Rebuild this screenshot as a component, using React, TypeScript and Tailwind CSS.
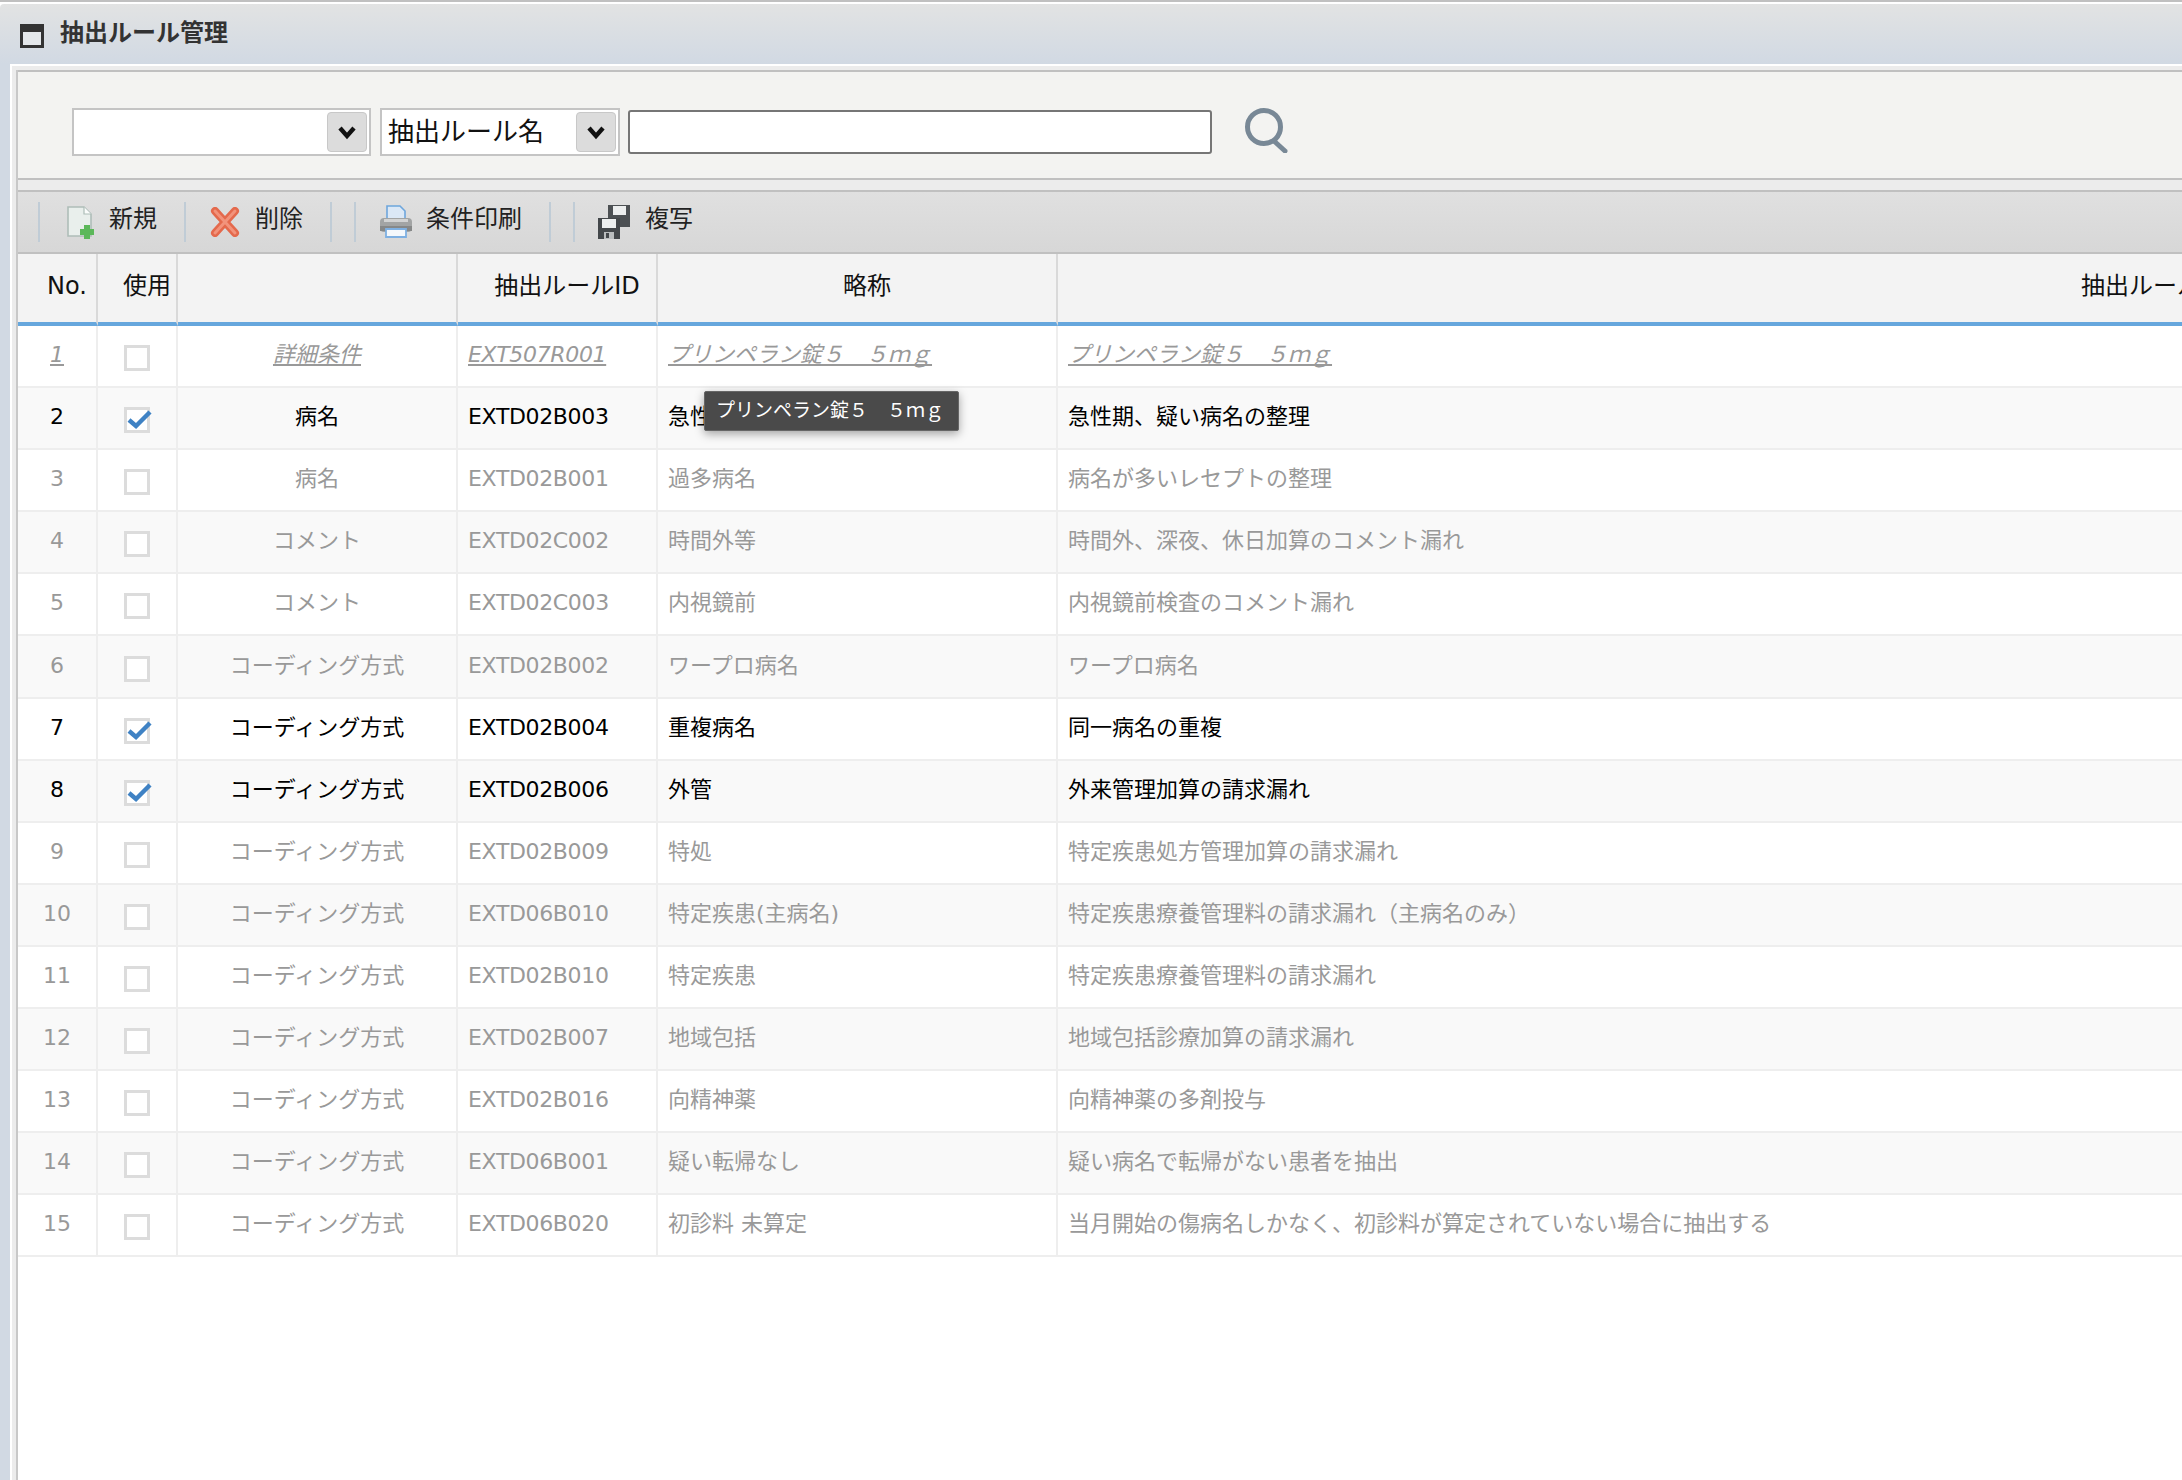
import React from 'react';

interface Rule {
  no: number;
  kind: string;
  id: string;
  short: string;
  name: string;
  used?: boolean;
  link?: boolean;
}

const coding = 'コーディング方式';

const rules: Rule[] = [
  { no: 1, kind: '詳細条件', id: 'EXT507R001', short: 'プリンペラン錠５　５ｍｇ', name: 'プリンペラン錠５　５ｍｇ', link: true },
  { no: 2, kind: '病名', id: 'EXTD02B003', short: '急性期・疑い', name: '急性期、疑い病名の整理', used: true },
  { no: 3, kind: '病名', id: 'EXTD02B001', short: '過多病名', name: '病名が多いレセプトの整理' },
  { no: 4, kind: 'コメント', id: 'EXTD02C002', short: '時間外等', name: '時間外、深夜、休日加算のコメント漏れ' },
  { no: 5, kind: 'コメント', id: 'EXTD02C003', short: '内視鏡前', name: '内視鏡前検査のコメント漏れ' },
  { no: 6, kind: coding, id: 'EXTD02B002', short: 'ワープロ病名', name: 'ワープロ病名' },
  { no: 7, kind: coding, id: 'EXTD02B004', short: '重複病名', name: '同一病名の重複', used: true },
  { no: 8, kind: coding, id: 'EXTD02B006', short: '外管', name: '外来管理加算の請求漏れ', used: true },
  { no: 9, kind: coding, id: 'EXTD02B009', short: '特処', name: '特定疾患処方管理加算の請求漏れ' },
  { no: 10, kind: coding, id: 'EXTD06B010', short: '特定疾患(主病名)', name: '特定疾患療養管理料の請求漏れ（主病名のみ）' },
  { no: 11, kind: coding, id: 'EXTD02B010', short: '特定疾患', name: '特定疾患療養管理料の請求漏れ' },
  { no: 12, kind: coding, id: 'EXTD02B007', short: '地域包括', name: '地域包括診療加算の請求漏れ' },
  { no: 13, kind: coding, id: 'EXTD02B016', short: '向精神薬', name: '向精神薬の多剤投与' },
  { no: 14, kind: coding, id: 'EXTD06B001', short: '疑い転帰なし', name: '疑い病名で転帰がない患者を抽出' },
  { no: 15, kind: coding, id: 'EXTD06B020', short: '初診料 未算定', name: '当月開始の傷病名しかなく、初診料が算定されていない場合に抽出する' },
];

const NewIcon = () => (
  <svg width="30" height="34" viewBox="0 0 30 34">
    <path d="M2 2h16l7 7v22H2z" fill="#e9efec" stroke="#aebdb8" strokeWidth="1.6" />
    <path d="M18 2v7h7" fill="#fafcfb" stroke="#aebdb8" strokeWidth="1.2" />
    <path d="M18 20h6v4h4v6h-4v4h-6v-4h-4v-6h4z" fill="#5cb85a" />
  </svg>
);

const DeleteIcon = () => (
  <svg width="30" height="30" viewBox="0 0 30 30">
    <path d="M5 4 L25 26 M25 4 L5 26" stroke="#e4694c" strokeWidth="8" strokeLinecap="round" />
    <path d="M5 4 L25 26 M25 4 L5 26" stroke="#f2937b" strokeWidth="3" strokeLinecap="round" />
  </svg>
);

const PrintIcon = () => (
  <svg width="34" height="34" viewBox="0 0 34 34">
    <path d="M8 1h13l5 5v10H8z" fill="#dbe8f6" stroke="#6ea6dc" strokeWidth="1.6" />
    <rect x="1" y="13" width="32" height="14" rx="4" fill="#a2a4a4" />
    <rect x="5" y="14" width="24" height="3" fill="#d2d3d3" />
    <rect x="1" y="21" width="32" height="5" fill="#868888" />
    <path d="M7 24h20v8H7z" fill="#f4f8fc" stroke="#7eb0e2" strokeWidth="1.8" />
  </svg>
);

const SaveIcon = () => (
  <svg width="34" height="36" viewBox="0 0 34 36">
    <path d="M11 1h22v22H20V14H11z" fill="#4c5053" />
    <rect x="16" y="2" width="13" height="9" fill="#eceeee" />
    <path d="M1 14h22v21H1z" fill="#43474a" />
    <rect x="5" y="15" width="14" height="9" fill="#eceeee" />
    <rect x="7" y="28" width="10" height="7" fill="#b9bcbd" />
    <rect x="9" y="29" width="3" height="5" fill="#43474a" />
  </svg>
);

const Sep = ({ className = '' }: { className?: string }) => (
  <div className={`w-[2px] h-10 bg-[#c0ccd6] shrink-0 ${className}`}></div>
);

const Tool = ({ icon, label, className = '' }: { icon: React.ReactNode; label: string; className?: string }) => (
  <div className={`flex items-center shrink-0 ${className}`}>
    {icon}
    <span className="text-[24px] leading-none text-[#222] -mt-[6px]">{label}</span>
  </div>
);

const DropButton = () => (
  <div className="w-10 h-10 rounded-[4px] border border-[#c8c8c8] bg-[#dcdcdc] flex items-center justify-center">
    <svg width="20" height="15" viewBox="0 0 20 15">
      <path d="M3 3 L10 11 L17 3" fill="none" stroke="#111" strokeWidth="4.4" />
    </svg>
  </div>
);

const Check = ({ on }: { on?: boolean }) => (
  <div className="relative w-[26px] h-[26px] mx-auto mt-1 border-[3px] border-[#dcdcdc] bg-white">
    {on && (
      <svg className="absolute -left-[1px] -top-[2px]" width="26" height="24" viewBox="0 0 26 24">
        <path d="M3 12 L10 18 L24 4" fill="none" stroke="#3f82c4" strokeWidth="4.4" />
      </svg>
    )}
  </div>
);

const th = 'h-[72px] pl-5 pb-1 text-center font-normal text-[24px] text-[#111] border-r-2 border-[#d9d9d9] whitespace-nowrap overflow-visible';

export default function App() {
  return (
    <div
      className="relative w-[2182px] h-[1480px] overflow-hidden flex flex-col bg-white"
      style={{ fontFamily: '"DejaVu Sans", "Noto Sans CJK JP", sans-serif' }}
    >
      <div className="h-[2px] bg-[#c0c0c0] shrink-0"></div>
      <div className="h-[2px] bg-white shrink-0"></div>

      <div className="h-[60px] shrink-0 rounded-tl-[4px] bg-gradient-to-b from-[#e2e3e3] to-[#d1d9e3] flex items-center pl-5">
        <div className="w-6 h-6 mt-[4px] border-[3px] border-t-[8px] border-[#333] bg-[#e4e7ea]"></div>
        <span className="ml-4 text-[24px] font-bold leading-none text-[#333] -mt-[2px]">抽出ルール管理</span>
      </div>

      <div className="flex-1 flex min-h-0">
        <div className="w-[10px] bg-[#d1d9e3] shrink-0"></div>
        <div className="w-[2px] bg-white shrink-0"></div>
        <div className="flex-1 min-w-0 pt-[2px] bg-white flex flex-col">
          <div className="flex-1 min-h-0 flex flex-col bg-[#ececec] pt-1 pl-1">
            <div className="bg-white flex-1 min-h-0 flex flex-col border-l-2 border-[#c8c8c8] -mr-1">
              <div className="h-[110px] shrink-0 flex bg-[#f3f3f1] border-y-2 border-[#c0c0c0] pl-[54px]">
                <div className="relative top-[36px] flex h-[48px] items-center">
                  <div className="w-[299px] h-[48px] border-2 border-[#c4c4c4] bg-white flex items-center justify-end pr-[2px]">
                    <DropButton />
                  </div>
                  <div className="ml-[9px] w-[240px] h-[48px] border-2 border-[#c4c4c4] bg-white flex items-center justify-between pr-[2px] pl-[6px]">
                    <span className="text-[26px] leading-none text-[#111]">抽出ルール名</span>
                    <DropButton />
                  </div>
                  <div className="ml-2 w-[584px] h-[44px] border-2 border-[#767676] rounded-[3px] bg-white"></div>
                  <svg className="ml-8 -mt-[5px]" width="45" height="46" viewBox="0 0 45 46">
                    <circle cx="20" cy="20" r="16.5" fill="none" stroke="#788896" strokeWidth="5" />
                    <path d="M30 34 L41 44" stroke="#788896" strokeWidth="5" strokeLinecap="round" />
                  </svg>
                </div>
              </div>
              <div className="h-[10px] shrink-0 bg-[#ececec]"></div>
              <div className="h-[64px] shrink-0 bg-gradient-to-b from-[#e0e0e0] to-[#d7d7d7] border-y-2 border-[#c0c0c0] flex items-center pl-[20px]">
                <Sep />
                <Tool className="ml-[26px] gap-[13px]" icon={<NewIcon />} label="新規" />
                <Sep className="ml-[27px]" />
                <Tool className="ml-[24px] gap-[15px]" icon={<DeleteIcon />} label="削除" />
                <Sep className="ml-[27px]" />
                <Sep className="ml-[22px]" />
                <Tool className="ml-[23px] gap-[13px]" icon={<PrintIcon />} label="条件印刷" />
                <Sep className="ml-[27px]" />
                <Sep className="ml-[22px]" />
                <Tool className="ml-[22px] gap-[14px]" icon={<SaveIcon />} label="複写" />
              </div>

              <table className="table-fixed w-[3212px] border-separate border-spacing-0">
                <colgroup>
                  <col className="w-[80px]" />
                  <col className="w-[80px]" />
                  <col className="w-[280px]" />
                  <col className="w-[200px]" />
                  <col className="w-[400px]" />
                  <col />
                </colgroup>
                <thead>
                  <tr className="bg-[#f3f3f3]">
                    <th className={`${th} border-b-4 border-b-[#66a7dd]`}>No.</th>
                    <th className={`${th} border-b-4 border-b-[#66a7dd]`}>使用</th>
                    <th className={`${th} border-b-4 border-b-[#66a7dd]`}></th>
                    <th className={`${th} border-b-4 border-b-[#66a7dd]`}>抽出ルールID</th>
                    <th className={`${th} border-b-4 border-b-[#66a7dd]`}>略称</th>
                    <th className={`${th} border-b-4 border-b-[#66a7dd] border-r-0`}>抽出ルール名</th>
                  </tr>
                </thead>
                <tbody>
                  {rules.map((r) => {
                    const tone = r.used ? 'text-black' : 'text-[#999]';
                    const deco = r.link ? 'italic underline' : '';
                    const td = `h-[62.1px] pb-[2px] border-b-2 border-r-2 border-[#eeeeee] text-[22px] leading-none whitespace-nowrap overflow-visible ${tone}`;
                    return (
                      <tr key={r.no} className={r.no % 2 === 0 ? 'bg-[#f9f9f9]' : 'bg-white'}>
                        <td className={`${td} text-center`}><span className={deco}>{r.no}</span></td>
                        <td className="h-[62.1px] border-b-2 border-r-2 border-[#eeeeee]"><Check on={r.used} /></td>
                        <td className={`${td} text-center`}><span className={deco}>{r.kind}</span></td>
                        <td className={`${td} pl-[10px] tracking-[-0.35px]`}><span className={deco}>{r.id}</span></td>
                        <td className={`${td} pl-[10px]`}><span className={deco}>{r.short}</span></td>
                        <td className={`${td} pl-[10px] border-r-0`}><span className={deco}>{r.name}</span></td>
                      </tr>
                    );
                  })}
                </tbody>
              </table>
            </div>
          </div>
        </div>
      </div>

      {/* tooltip over row 2 */}
      <div className="absolute left-[704px] top-[391px] w-[255px] h-[40px] bg-[#4a4a4a] border border-[#666] rounded-[2px] shadow-[0_3px_10px_rgba(0,0,0,0.35)] flex items-center pl-[11px] pb-[2px] text-[19px] leading-none text-white whitespace-nowrap">
        プリンペラン錠５　５ｍｇ
      </div>
    </div>
  );
}
